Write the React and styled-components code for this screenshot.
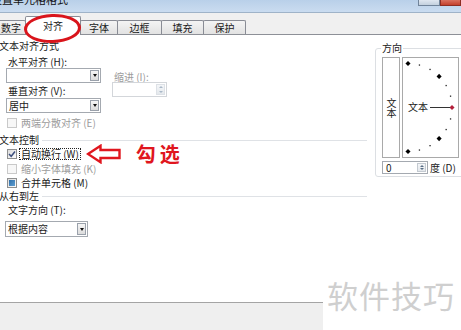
import React from 'react';
import styled, { createGlobalStyle } from 'styled-components';

const GlobalStyle = createGlobalStyle`
  html, body {
    margin: 0;
    padding: 0;
    background: #fff;
  }
  body {
    font-family: "Noto Sans CJK SC", "Liberation Sans", sans-serif;
    font-size: 10px;
    color: #1a1a1a;
  }
  #root {
    width: 461px;
    height: 330px;
    overflow: hidden;
  }
`;

const Window = styled.div`
  width: 461px;
  height: 330px;
  display: flex;
  flex-direction: column;
  overflow: hidden;
`;

const TitleBar = styled.div`
  height: 12px;
  flex: none;
  display: flex;
  justify-content: space-between;
  align-items: flex-start;
  overflow: hidden;
  background: linear-gradient(#b9d0e9, #cadcf0);
  border-bottom: 1px solid #9fb3c8;
`;

const TitleText = styled.div`
  font-size: 11px;
  line-height: 11px;
  margin-top: -6px;
  margin-left: -9px;
  color: #111;
  white-space: nowrap;
`;

const WinButtons = styled.div`
  display: flex;
`;

const WinButton = styled.div`
  width: ${(p) => p.$w}px;
  height: 6px;
  box-sizing: border-box;
  border: 1px solid ${(p) => (p.$close ? '#8e2d22' : '#71849a')};
  border-top: none;
  background: ${(p) =>
    p.$close ? 'linear-gradient(#d9705f, #c3402c)' : 'linear-gradient(#dfe7f0, #c3d0de)'};
`;

const TabStrip = styled.div`
  height: 21px;
  flex: none;
  display: flex;
  align-items: flex-end;
  background: #f0f0f0;
  border-bottom: 1px solid #8d9097;
`;

const Tab = styled.div`
  position: relative;
  box-sizing: border-box;
  width: ${(p) => p.$w}px;
  height: ${(p) => (p.$active ? 19 : 14)}px;
  margin-left: ${(p) => p.$ml || 0}px;
  margin-right: -1px;
  margin-bottom: ${(p) => (p.$active ? -1 : 0)}px;
  z-index: ${(p) => (p.$active ? 2 : 1)};
  display: flex;
  align-items: center;
  justify-content: center;
  padding-top: ${(p) => (p.$active ? 0 : 1)}px;
  border: 1px solid #898c95;
  border-bottom: none;
  border-radius: 2px 2px 0 0;
  background: ${(p) => (p.$active ? '#fff' : 'linear-gradient(#f4f4f4, #e2e2e2)')};
  font-size: 10px;
  line-height: 12px;
`;

const Ring = styled.div`
  position: absolute;
  left: -2px;
  top: -3px;
  width: 57px;
  height: 29px;
  box-sizing: border-box;
  border: 3px solid #d9141b;
  border-radius: 50%;
  transform: rotate(-2deg);
`;

const Body = styled.div`
  height: 267px;
  flex: none;
  display: flex;
  background: #fff;
`;

const LeftCol = styled.div`
  width: 375px;
  flex: none;
  display: flex;
  flex-direction: column;
  padding-top: 5px;
  box-sizing: border-box;
`;

const Heading = styled.div`
  display: flex;
  align-items: center;
  gap: 3px;
  height: 12px;
  line-height: 12px;
  margin-top: ${(p) => p.$mt || 0}px;
  margin-left: -1px;
  margin-right: 8px;
  white-space: nowrap;

  &::after {
    content: '';
    flex: 1;
    height: 0;
    border-top: 1px solid ${(p) => (p.$line ? '#dfe2e6' : 'transparent')};
  }
`;

const Label = styled.div`
  height: 12px;
  line-height: 12px;
  margin-top: ${(p) => p.$mt || 0}px;
  padding-left: ${(p) => p.$pl ?? 8}px;
  color: ${(p) => (p.$disabled ? '#9c9c9c' : '#1a1a1a')};
  white-space: nowrap;
`;

const AlignGrid = styled.div`
  display: grid;
  grid-template-columns: 95px 55px;
  grid-template-rows: 12px 15px 15px 15px;
  column-gap: 11px;
  margin-left: 6px;
  margin-top: 4px;
`;

const GridLabel = styled(Label)`
  padding-left: 2px;
  align-self: ${(p) => p.$align || 'center'};
`;

const ComboBox = styled.div`
  width: ${(p) => p.$w}px;
  height: ${(p) => p.$h || 15}px;
  box-sizing: border-box;
  display: flex;
  align-items: stretch;
  border: 1px solid #a4a9b0;
  background: #fff;
  margin-top: ${(p) => p.$mt || 0}px;
  margin-left: ${(p) => p.$ml || 0}px;
`;

const ComboText = styled.div`
  flex: 1;
  padding-left: 2px;
  display: flex;
  align-items: center;
  line-height: 12px;
`;

const DropButton = styled.div`
  width: 9px;
  margin: 1px;
  box-sizing: border-box;
  border: 1px solid #9aa1ab;
  background: linear-gradient(#f6f6f6, #dcdcdc);
  display: flex;
  align-items: center;
  justify-content: center;

  &::after {
    content: '';
    border-left: 2.5px solid transparent;
    border-right: 2.5px solid transparent;
    border-top: 3px solid #111;
  }
`;

const SpinBox = styled.div`
  width: ${(p) => p.$w}px;
  height: ${(p) => p.$h}px;
  box-sizing: border-box;
  display: flex;
  border: 1px solid ${(p) => (p.$disabled ? '#d3d6da' : '#a4a9b0')};
  background: #fff;
  margin-top: ${(p) => p.$mt || 0}px;
`;

const SpinText = styled.div`
  flex: 1;
  padding-left: 3px;
  line-height: ${(p) => p.$lh || 11}px;
`;

const SpinButtons = styled.div`
  width: 9px;
  margin: 1px;
  display: flex;
  flex-direction: column;
  border: 1px solid ${(p) => (p.$disabled ? '#dde1e6' : '#c4cad1')};
  background: linear-gradient(#f4f6f8, #e4e8ec);
  box-sizing: border-box;
`;

const SpinArrow = styled.div`
  flex: 1;
  display: flex;
  align-items: center;
  justify-content: center;

  &::after {
    content: '';
    border-left: 2px solid transparent;
    border-right: 2px solid transparent;
    ${(p) => (p.$up ? 'border-bottom' : 'border-top')}: 2px solid
      ${(p) => (p.$disabled ? '#a9b8c8' : '#5a6f86')};
  }
`;

const CheckRow = styled.div`
  display: flex;
  align-items: center;
  height: 12px;
  margin-top: ${(p) => p.$mt || 0}px;
  padding-left: 7px;
  white-space: nowrap;
`;

const Box = styled.div`
  width: 10px;
  height: 10px;
  flex: none;
  box-sizing: border-box;
  border: 1px solid ${(p) => (p.$disabled ? '#c9c9c9' : '#8e8f8f')};
  background: ${(p) => (p.$disabled ? '#f7f7f7' : 'linear-gradient(135deg, #dcdcdc, #fbfbfb)')};
  display: flex;
  align-items: center;
  justify-content: center;
`;

const MixedMark = styled.div`
  width: 6px;
  height: 6px;
  background: linear-gradient(135deg, #2f6fa8, #5f9fd2);
`;

const CheckLabel = styled.div`
  margin-left: 2px;
  padding: 0 1px;
  line-height: 10px;
  border: 1px dotted ${(p) => (p.$focus ? '#222' : 'transparent')};
  color: ${(p) => (p.$disabled ? '#9c9c9c' : '#1a1a1a')};
`;

const Arrow = styled.svg`
  flex: none;
  margin: -4px 0 -4px 5px;
`;

const Note = styled.div`
  margin-left: 14px;
  font-size: 20px;
  font-weight: 700;
  letter-spacing: 4px;
  line-height: 12px;
  color: #e0161e;
`;

const RightCol = styled.div`
  flex: 1;
  padding-top: 7px;
`;

const Group = styled.fieldset`
  margin: 0;
  width: 84px;
  padding: 3px 0 2px 6px;
  border: 1px solid #dcdfe3;
  border-radius: 3px;
`;

const Legend = styled.legend`
  padding: 0 1px;
  margin-left: -1px;
  line-height: 12px;
  font-size: 10px;
`;

const OrientRow = styled.div`
  display: flex;
  gap: 2px;
  height: 101px;
`;

const VerticalBox = styled.div`
  width: 18px;
  box-sizing: border-box;
  border: 1px solid #a9a9a9;
  display: flex;
  align-items: center;
  justify-content: center;
  writing-mode: vertical-rl;
  text-orientation: upright;
  line-height: 10px;
  letter-spacing: 0;
`;

const DialBox = styled.div`
  width: 57px;
  box-sizing: border-box;
  border: 1px solid #a9a9a9;
  display: flex;
`;

const DegreeRow = styled.div`
  display: flex;
  align-items: center;
  gap: 2px;
  margin-top: 3px;
  height: 13px;
  white-space: nowrap;
`;

const Footer = styled.div`
  flex: 1;
  display: flex;
`;

const FooterBar = styled.div`
  width: 323px;
  box-sizing: border-box;
  border-top: 1px solid #a4a4a4;
  background: #efefef;
`;

const MarkSlot = styled.div`
  flex: 1;
  position: relative;
  background: #fff;
`;

const Watermark = styled.div`
  position: absolute;
  left: 4px;
  bottom: 18px;
  font-size: 31px;
  line-height: 34px;
  letter-spacing: 1px;
  color: #cfcfcf;
  white-space: nowrap;
`;

const CheckMark = () => (
  <svg width="8" height="8" viewBox="0 0 8 8">
    <path d="M1 4 L3.2 6.3 L7 1.5" fill="none" stroke="#3c4f7e" strokeWidth="1.5" />
  </svg>
);

const Dial = () => {
  const pts = [];
  for (let a = 90; a >= -90; a -= 15) {
    const r = (a * Math.PI) / 180;
    pts.push({ a, x: 5 + 44 * Math.cos(r), y: 49.5 - 44 * Math.sin(r) });
  }
  return (
    <svg width="55" height="99" viewBox="0 0 55 99">
      {pts.map((p) =>
        p.a % 45 === 0 ? (
          <rect
            key={p.a}
            x={p.x - 1.8}
            y={p.y - 1.8}
            width="3.6"
            height="3.6"
            transform={`rotate(45 ${p.x} ${p.y})`}
            fill={p.a === 0 ? '#b3203b' : '#000'}
          />
        ) : (
          <rect key={p.a} x={p.x - 0.6} y={p.y - 0.6} width="1.3" height="1.3" fill="#222" />
        )
      )}
      <text x="5" y="52.5" fontSize="10" fontFamily="Noto Sans CJK SC, sans-serif" fill="#1a1a1a">
        文本
      </text>
      <line x1="27" y1="49.5" x2="47" y2="49.5" stroke="#333" strokeWidth="1" />
    </svg>
  );
};

export default function App() {
  return (
    <Window>
      <GlobalStyle />
      <TitleBar>
        <TitleText>设置单元格格式</TitleText>
        <WinButtons>
          <WinButton $w={22} />
          <WinButton $w={21} $close />
        </WinButtons>
      </TitleBar>

      <TabStrip>
        <Tab $w={30} $ml={-4}>数字</Tab>
        <Tab $w={56} $active>
          对齐
          <Ring />
        </Tab>
        <Tab $w={38}>字体</Tab>
        <Tab $w={45}>边框</Tab>
        <Tab $w={43}>填充</Tab>
        <Tab $w={43}>保护</Tab>
      </TabStrip>

      <Body>
        <LeftCol>
          <Heading>文本对齐方式</Heading>
          <AlignGrid>
            <GridLabel>水平对齐 (H):</GridLabel>
            <div />
            <ComboBox $w={95}>
              <ComboText />
              <DropButton />
            </ComboBox>
            <GridLabel $align="end" $disabled>
              缩进 (I):
            </GridLabel>
            <GridLabel>垂直对齐 (V):</GridLabel>
            <SpinBox $w={55} $h={15} $mt={-1} $disabled>
              <SpinText />
              <SpinButtons $disabled>
                <SpinArrow $up $disabled />
                <SpinArrow $disabled />
              </SpinButtons>
            </SpinBox>
            <ComboBox $w={95}>
              <ComboText>居中</ComboText>
              <DropButton />
            </ComboBox>
            <div />
          </AlignGrid>
          <CheckRow $mt={4}>
            <Box $disabled />
            <CheckLabel $disabled>两端分散对齐 (E)</CheckLabel>
          </CheckRow>

          <Heading $mt={5} $line>
            文本控制
          </Heading>
          <CheckRow $mt={2}>
            <Box>
              <CheckMark />
            </Box>
            <CheckLabel $focus>自动换行 (W)</CheckLabel>
            <Arrow width="36" height="20" viewBox="0 0 36 20">
              <path
                d="M2 10 L14.5 1.8 L14.5 6 L33.5 6 L33.5 14 L14.5 14 L14.5 18.2 Z"
                fill="#fff"
                stroke="#e0161e"
                strokeWidth="2.4"
                strokeLinejoin="miter"
              />
            </Arrow>
            <Note>勾选</Note>
          </CheckRow>
          <CheckRow $mt={3}>
            <Box $disabled />
            <CheckLabel $disabled>缩小字体填充 (K)</CheckLabel>
          </CheckRow>
          <CheckRow $mt={2}>
            <Box>
              <MixedMark />
            </Box>
            <CheckLabel>合并单元格 (M)</CheckLabel>
          </CheckRow>

          <Heading $mt={1} $line>
            从右到左
          </Heading>
          <Label $mt={2}>文字方向 (T):</Label>
          <ComboBox $w={83} $h={16} $mt={5} $ml={5}>
            <ComboText>根据内容</ComboText>
            <DropButton />
          </ComboBox>
        </LeftCol>

        <RightCol>
          <Group>
            <Legend>方向</Legend>
            <OrientRow>
              <VerticalBox>文本</VerticalBox>
              <DialBox>
                <Dial />
              </DialBox>
            </OrientRow>
            <DegreeRow>
              <SpinBox $w={46} $h={13}>
                <SpinText $lh={11}>0</SpinText>
                <SpinButtons>
                  <SpinArrow $up />
                  <SpinArrow />
                </SpinButtons>
              </SpinBox>
              <span>度 (D)</span>
            </DegreeRow>
          </Group>
        </RightCol>
      </Body>

      <Footer>
        <FooterBar />
        <MarkSlot>
          <Watermark>软件技巧</Watermark>
        </MarkSlot>
      </Footer>
    </Window>
  );
}
